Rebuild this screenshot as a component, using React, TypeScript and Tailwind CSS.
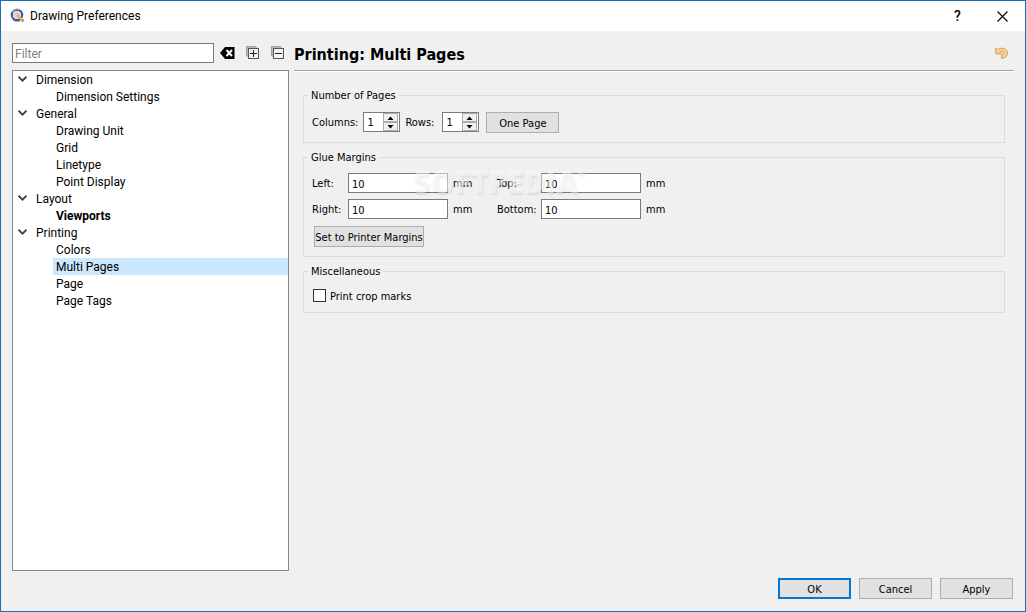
import React, { useState } from "react";

type Section = { name: string; pages: string[] };

const sections: Section[] = [
  { name: "Dimension", pages: ["Dimension Settings"] },
  { name: "General", pages: ["Drawing Unit", "Grid", "Linetype", "Point Display"] },
  { name: "Layout", pages: ["Viewports"] },
  { name: "Printing", pages: ["Colors", "Multi Pages", "Page", "Page Tags"] },
];

function AppLogo() {
  return (
    <svg width="16" height="16" viewBox="0 0 16 16" aria-hidden="true">
      <circle cx="7" cy="7" r="5.2" fill="#f4f4f8" stroke="#4a5a94" strokeWidth="2.2" />
      <path d="M2.2 4.2A5.6 5.6 0 0 1 9 1.6" fill="none" stroke="#9aa7cc" strokeWidth="1.4" />
      <path d="M7 3.5v7M3.5 7h7M4.6 5.2h4.8v3.8H4.6z" fill="none" stroke="#c9b9b4" strokeWidth="0.8" />
      <path d="M7.5 7l5 5.2" stroke="#eeb04a" strokeWidth="2.4" />
      <path d="M12 11.8l1.6 1.6" stroke="#d9705a" strokeWidth="2.4" />
      <path d="M3 12.4q3 2.2 7 .8" fill="none" stroke="#9aa0b4" strokeWidth="1" />
    </svg>
  );
}

function ClearIcon() {
  return (
    <svg width="15" height="12" viewBox="0 0 15 12" aria-hidden="true">
      <path d="M0 6L5 0h9.500v12H5z" fill="#000" />
      <path d="M6.500 3l5.500 6M12 3L6.500 9" stroke="#fff" strokeWidth="2" />
    </svg>
  );
}

function BoxIcon({ plus = false }: { plus?: boolean }) {
  return (
    <svg width="13" height="14" viewBox="0 0 13 14" shapeRendering="crispEdges" aria-hidden="true">
      <path d="M0.500 10V0.500H10" fill="none" stroke="#a0a0a0" />
      <path d="M1.500 11V1.500H11" fill="none" stroke="#b8b8b8" />
      <rect x="2.500" y="2.500" width="10" height="10" fill="#f4f4f4" stroke="#555" />
      <path d="M4 7.500h7" stroke="#222" />
      {plus && <path d="M7.500 4v7" stroke="#222" />}
    </svg>
  );
}

function UndoIcon() {
  return (
    <svg width="13" height="12" viewBox="0 0 13 12" aria-hidden="true">
      <path
        d="M0.700 0.800v6h5.700L4.600 5C6.200 3.800 8.700 4 8.700 6 8.700 7.300 7.800 7.800 6.600 7.800v3.400c3.600 0 5.800-1.900 5.800-5.200C12.400 1.200 6.300-.2 2.500 2.800z"
        fill="#f9d49a"
        stroke="#d9984e"
        strokeWidth="1"
        strokeLinejoin="round"
      />
    </svg>
  );
}

function Spin({ id, label }: { id: string; label: string }) {
  const [value, setValue] = useState(1);
  const step = "flex h-[9px] w-[15px] items-center justify-center border border-[#acacac] bg-[#f0f0f0]";
  return (
    <>
      <label htmlFor={id} className="min-w-8 pt-px">{label}</label>
      <span className="flex h-5 w-[37px] items-center border border-[#7a7a7a] bg-white pr-px">
        <input
          id={id}
          type="text"
          inputMode="numeric"
          value={value}
          onChange={(e) => setValue(Number(e.target.value) || 1)}
          className="w-4 min-w-0 flex-1 bg-transparent pt-0.5 pl-[3px] outline-none"
        />
        <span className="flex flex-col">
          <button type="button" aria-label="Increase" className={step} onClick={() => setValue(value + 1)}>
            <svg width="7" height="4" viewBox="0 0 7 4"><path d="M0.500 4L3.500 0.500L6.500 4z" /></svg>
          </button>
          <button type="button" aria-label="Decrease" className={step} onClick={() => setValue(Math.max(1, value - 1))}>
            <svg width="7" height="4" viewBox="0 0 7 4"><path d="M0.500 0L3.500 3.500L6.500 0z" /></svg>
          </button>
        </span>
      </span>
    </>
  );
}

function Margin({ id, label }: { id: string; label: string }) {
  return (
    <>
      <label htmlFor={id} className="pt-0.5">{label}</label>
      <input id={id} type="text" defaultValue="10" className="h-5 w-[100px] border border-[#7a7a7a] bg-white px-[3px] pt-0.5 outline-none" />
      <span className="pt-0.5 pl-[5px]">mm</span>
    </>
  );
}

function Group({ title, children }: { title: string; children: React.ReactNode }) {
  return (
    <fieldset className="min-w-0 border border-[#dcdcdc] px-2 pb-[9px]">
      <legend className="-ml-1 h-[14px] px-[3px] leading-4">{title}</legend>
      <div className="pt-[9px]">{children}</div>
    </fieldset>
  );
}

const button = "h-[21px] border border-[#adadad] bg-[#e1e1e1] pt-0.5";

export default function App() {
  const [current, setCurrent] = useState("Multi Pages");
  return (
    <main className="flex min-h-screen flex-col border border-[#1a6fb5] bg-[#f0f0f0] font-['DejaVu_Sans_Condensed','DejaVu_Sans',sans-serif] text-[11px] leading-[14px] text-black">
      <header className="flex h-[30px] items-center bg-white pl-[9px] font-['Roboto',sans-serif] text-xs">
        <AppLogo />
        <h1 className="flex-1 pl-1">Drawing Preferences</h1>
        <button type="button" aria-label="Help" className="h-full w-[45px] text-sm font-medium">?</button>
        <button type="button" aria-label="Close" className="flex h-full w-[45px] items-center justify-center">
          <svg width="11" height="11" viewBox="0 0 11 11"><path d="M0.500 0.500l10 10M10.500 0.500l-10 10" stroke="#000" strokeWidth="1.100" /></svg>
        </button>
      </header>

      <div className="flex flex-1 gap-[5px] pl-[11px] pr-[11px] pt-2">
        <nav className="flex w-[277px] shrink-0 flex-col font-['Roboto',sans-serif] text-xs">
          <div className="flex h-7 items-center">
            <input
              aria-label="Filter"
              placeholder="Filter"
              className="h-5 w-[202px] border border-[#7a7a7a] bg-white px-0.5 pt-0.5 outline-none placeholder:text-[#808080]"
            />
            <button type="button" aria-label="Clear filter" className="ml-1.5"><ClearIcon /></button>
            <button type="button" aria-label="Expand all" className="ml-[11px]"><BoxIcon plus /></button>
            <button type="button" aria-label="Collapse all" className="ml-3"><BoxIcon /></button>
          </div>
          <ul className="mt-[3px] flex-1 border border-[#828790] bg-white leading-[19px]">
            {sections.map((section) => (
              <li key={section.name}>
                <button type="button" className="flex h-[17px] w-full items-center pl-[5px] text-left">
                  <svg width="9" height="7" viewBox="0 0 9 7" fill="none" stroke="#404040" strokeWidth="1.800">
                    <path d="M0.500 0.700l4 4 4-4" />
                  </svg>
                  <span className="h-[17px] pl-[9px]">{section.name}</span>
                </button>
                <ul className="pl-10">
                  {section.pages.map((page) => (
                    <li key={page}>
                      <button
                        type="button"
                        onClick={() => setCurrent(page)}
                        className={`flex h-[17px] w-full items-start pl-[3px] text-left ${page === current ? "bg-[#cce8ff]" : ""} ${page === "Viewports" ? "font-bold" : ""}`}
                      >
                        {page}
                      </button>
                    </li>
                  ))}
                </ul>
              </li>
            ))}
          </ul>
        </nav>

        <section className="flex min-w-0 flex-1 flex-col">
          <div className="flex h-8 items-center justify-between border-b border-[#a0a0a0] pr-1.5">
            <h2 className="text-base font-bold">Printing: Multi Pages</h2>
            <button type="button" aria-label="Reset" className="pb-1"><UndoIcon /></button>
          </div>
          <div className="flex flex-col gap-[7px] border-t border-white px-[9px] pt-4">
            <Group title="Number of Pages">
              <div className="flex items-start gap-[5px] pt-px leading-5">
                <Spin id="columns" label="Columns:" />
                <Spin id="rows" label="Rows:" />
                <button type="button" className={`${button} ml-0.5 w-[73px] leading-[14px]`}>One Page</button>
              </div>
            </Group>
            <Group title="Glue Margins">
              <div className="relative grid grid-cols-[36px_100px_49px_44px_100px_auto] items-center justify-start gap-y-1.5">
                <Margin id="left" label="Left:" />
                <Margin id="top" label="Top:" />
                <Margin id="right" label="Right:" />
                <Margin id="bottom" label="Bottom:" />
                <span className="pointer-events-none absolute -top-1.5 left-[101px] flex font-['Open_Sans',sans-serif] text-[30px] leading-[30px] font-extrabold text-white/50 [text-shadow:1px_2px_2px_rgb(0_0_0/0.08)]">
                  SOFTPEDIA<sup className="top-0 text-[9px] leading-3">®</sup>
                </span>
              </div>
              <button type="button" className={`${button} mt-[7px] ml-0.5 w-[110px] whitespace-nowrap`}>Set to Printer Margins</button>
            </Group>
            <Group title="Miscellaneous">
              <label className="flex h-4 w-fit items-center gap-1 pt-px pl-px">
                <input type="checkbox" className="h-[13px] w-[13px] appearance-none border border-[#333] bg-white checked:bg-[#333]" />
                <span className="pt-0.5">Print crop marks</span>
              </label>
            </Group>
          </div>
        </section>
      </div>

      <footer className="flex justify-end gap-2 px-3 pt-[7px] pb-3">
        <button type="button" className="h-[21px] w-[73px] border-2 border-[#0078d7] bg-[#e1e1e1] pt-0.5">OK</button>
        <button type="button" className={`${button} w-[73px]`}>Cancel</button>
        <button type="button" className={`${button} w-[73px]`}>Apply</button>
      </footer>
    </main>
  );
}
